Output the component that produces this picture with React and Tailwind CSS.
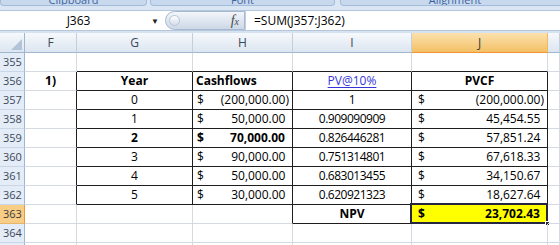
import React from "react";
import clsx from "clsx";

const W = ["w-[25px]", "w-[52px]", "w-[116px]", "w-[100px]", "w-[119px]", "w-[136px]", "w-[12px]"];
const isT = (r, c) =>
  (r >= 356 && r <= 362 && c >= 2 && c <= 5) || (r === 363 && (c === 4 || c === 5));

function Cell({ r, c, className = "", children }) {
  const rb = isT(r, c) || isT(r, c + 1);
  const bb = isT(r, c) || isT(r + 1, c);
  return (
    <div
      className={clsx(
        "relative box-border h-full shrink-0 border-r border-b flex items-center leading-[18px] whitespace-nowrap",
        W[c],
        rb ? "border-r-[#1e1e1e]" : "border-r-[#d5dae2]",
        bb ? "border-b-[#1e1e1e]" : "border-b-[#d5dae2]",
        className
      )}
    >
      {children}
    </div>
  );
}

function Acct({ v, pl }) {
  const neg = v.startsWith("(");
  return (
    <>
      <span className={pl}>$</span>
      <span className="ml-auto pr-[3px]">
        {v}
        {!neg && <span className="invisible">)</span>}
      </span>
    </>
  );
}

function RowHead({ n, sel }) {
  return (
    <div
      className={clsx(
        "w-[25px] shrink-0 h-full box-border border-r border-b flex items-center pl-[3px] text-[11px]",
        sel
          ? "bg-[#f8cd86] border-r-[#f29436] border-b-[#e8b56a] text-[#3a3a3a]"
          : "bg-[#e4ecf7] border-r-[#9eb6ce] border-b-[#c9d6e6] text-[#3c4858]"
      )}
    >
      {n}
    </div>
  );
}

const rows = [
  { n: 356, g: "Year", h: null, i: "PV@10%", j: null, head: true },
  { n: 357, g: "0", h: "(200,000.00)", i: "1", j: "(200,000.00)" },
  { n: 358, g: "1", h: "50,000.00", i: "0.909090909", j: "45,454.55" },
  { n: 359, g: "2", h: "70,000.00", i: "0.826446281", j: "57,851.24", bold: true },
  { n: 360, g: "3", h: "90,000.00", i: "0.751314801", j: "67,618.33" },
  { n: 361, g: "4", h: "50,000.00", i: "0.683013455", j: "34,150.67" },
  { n: 362, g: "5", h: "30,000.00", i: "0.620921323", j: "18,627.64" },
];

function Empty({ n, sel }) {
  return (
    <div className="flex h-[19px]">
      <RowHead n={n} sel={sel} />
      {[1, 2, 3, 4, 5, 6].map((c) => (
        <Cell key={c} r={n} c={c} />
      ))}
    </div>
  );
}

function Group({ w, label }) {
  return (
    <div
      className={clsx(
        "h-[6px] shrink-0 box-border border border-t-0 border-[#a3bcdc] rounded-b-[4px] bg-[#c8d9ee] overflow-hidden flex justify-center",
        w
      )}
    >
      <span className="text-[11px] leading-[11px] -mt-[6px] text-[#3d64a0]">{label}</span>
    </div>
  );
}

function ColHead({ c, label, sel }) {
  return (
    <div
      className={clsx(
        "h-full shrink-0 box-border border-r border-b flex items-center justify-center text-[12px]",
        W[c],
        sel
          ? "bg-linear-to-b from-[#fbe1ad] to-[#f3c064] border-r-[#f0b95c] border-b-[#f29436] text-[#3a3a3a]"
          : "bg-linear-to-b from-[#f6f9fc] to-[#dce5f0] border-r-[#c3cfdd] border-b-[#9eb6ce] text-[#3c4858]"
      )}
    >
      {label}
    </div>
  );
}

export default function App() {
  return (
    <div className="w-[560px] h-[245px] overflow-hidden bg-white font-['Open_Sans',sans-serif] text-[12px] text-black">
      {/* ribbon bottom */}
      <div className="h-[10px] bg-[#dbe6f4] flex overflow-hidden">
        <Group w="w-[147px]" label="Clipboard" />
        <div className="w-[3px] shrink-0" />
        <Group w="w-[185px]" label="Font" />
        <div className="w-[5px] shrink-0" />
        <Group w="w-[230px]" label="Alignment" />
      </div>
      {/* formula bar */}
      <div className="h-[21px] box-border border-y border-[#b3c6dc] bg-white flex">
        <div className="w-[165px] shrink-0 flex items-center">
          <span className="flex-1 text-center pl-[6px]">J363</span>
          <span className="text-[8px] leading-none mr-[6px] text-[#222]">▼</span>
        </div>
        <div className="w-[80px] shrink-0 box-border border border-[#a6b9d1] rounded-l-full bg-linear-to-b from-[#f3f6fa] to-[#cdd8e7] flex items-center">
          <div className="w-[11px] h-[11px] ml-[3px] rounded-full bg-linear-to-b from-[#ffffff] to-[#d4dde9] border border-[#b7c5d8]" />
          <span className="ml-auto mr-[5px] font-['Liberation_Serif',serif] italic text-[14px] leading-none text-[#4a4a4a]">
            f<span className="text-[10px]">x</span>
          </span>
        </div>
        <div className="flex-1 flex items-center pl-[8px] border-l border-[#c2cfdf]">=SUM(J357:J362)</div>
      </div>
      <div className="h-[2px] bg-[#d7e2f0]" />
      {/* column header */}
      <div className="flex h-[20px]">
        <div className="w-[25px] shrink-0 h-full box-border border-r border-b border-r-[#9eb6ce] border-b-[#9eb6ce] bg-linear-to-b from-[#f6f9fc] to-[#dce5f0] relative">
          <svg className="absolute right-[2px] bottom-[2px]" width="11" height="11" viewBox="0 0 11 11">
            <polygon points="11,0 11,11 0,11" fill="#b4c4d8" />
          </svg>
        </div>
        <ColHead c={1} label="F" />
        <ColHead c={2} label="G" />
        <ColHead c={3} label="H" />
        <ColHead c={4} label="I" />
        <ColHead c={5} label="J" sel />
        <ColHead c={6} label="" />
      </div>
      <Empty n={355} />
      {rows.map((row) => (
        <div key={row.n} className="flex h-[19px]">
          <RowHead n={row.n} />
          <Cell r={row.n} c={1} className="justify-center font-bold">
            {row.head ? "1)" : ""}
          </Cell>
          <Cell r={row.n} c={2} className={clsx("justify-center", (row.head || row.bold) && "font-bold")}>
            {row.g}
          </Cell>
          <Cell r={row.n} c={3} className={clsx((row.head || row.bold) && "font-bold")}>
            {row.head ? <span className="pl-[3px]">Cashflows</span> : <Acct v={row.h} pl="pl-[4px]" />}
          </Cell>
          <Cell r={row.n} c={4} className="justify-center">
            {row.head ? (
              <span className="text-[#3535d8] underline underline-offset-[2px]">PV@10%</span>
            ) : (
              <span className="tracking-[-0.5px]">{row.i}</span>
            )}
          </Cell>
          <Cell r={row.n} c={5} className={clsx(row.head && "justify-center font-bold")}>
            {row.head ? "PVCF" : <Acct v={row.j} pl="pl-[6px]" />}
          </Cell>
          <Cell r={row.n} c={6} />
        </div>
      ))}
      <div className="flex h-[19px]">
        <RowHead n={363} sel />
        <Cell r={363} c={1} />
        <Cell r={363} c={2} />
        <Cell r={363} c={3} />
        <Cell r={363} c={4} className="justify-center font-bold">NPV</Cell>
        <Cell r={363} c={5} className="bg-[#ffff00] font-bold">
          <Acct v="23,702.43" pl="pl-[6px]" />
          <div className="absolute -left-[2px] -top-[2px] -right-[1px] -bottom-[1px] border-2 border-[#262640] pointer-events-none" />
          <div className="absolute -right-[3px] -bottom-[3px] w-[5px] h-[5px] bg-[#262640] border border-white" />
        </Cell>
        <Cell r={363} c={6} />
      </div>
      <Empty n={364} />
      <Empty n={365} />
    </div>
  );
}
